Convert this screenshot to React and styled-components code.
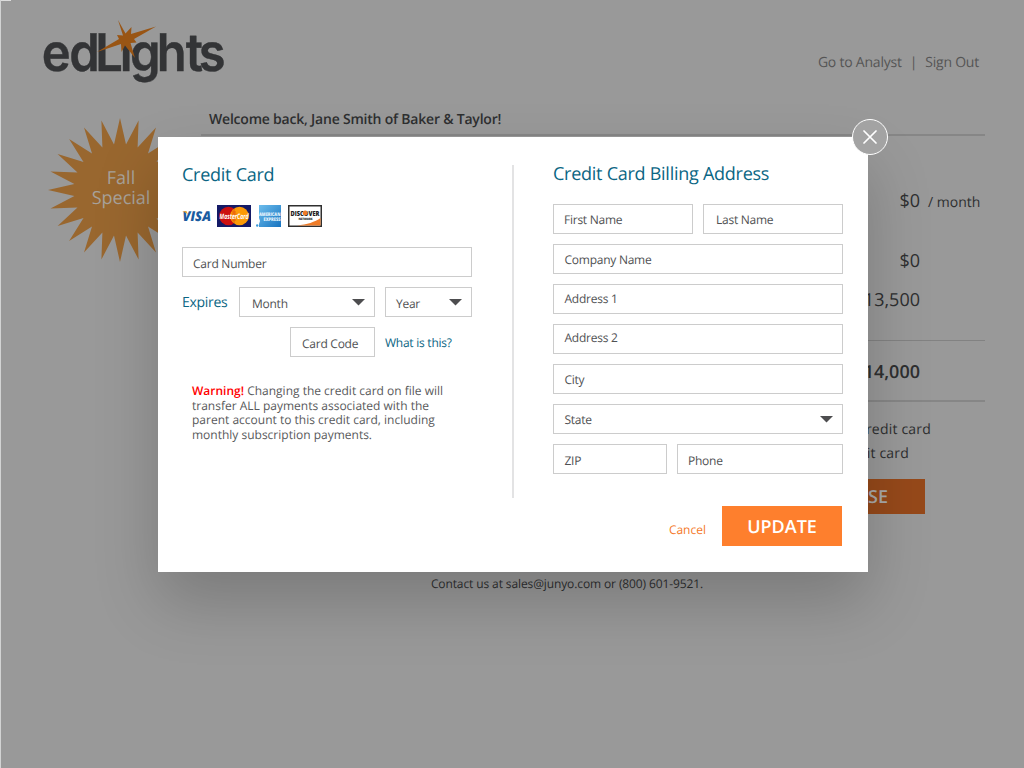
import React from 'react';
import styled, { createGlobalStyle } from 'styled-components';

const burstPoints = Array.from({ length: 48 }, (_, i) => {
  const r = i % 2 === 0 ? 72 : 46;
  const a = (i * 7.5 * Math.PI) / 180;
  return `${(72 + r * Math.sin(a)).toFixed(1)},${(72 - r * Math.cos(a)).toFixed(1)}`;
}).join(' ');

const Logo = () => (
  <LogoSvg viewBox="0 0 190 70" role="img" aria-label="edLights">
    <g transform="scale(0.94 1)">
      <text y="53" x="-0.4 28.9 56.6 82.7 93.7 122 153 166.8">edLıghts</text>
    </g>
    <polygon points="76,2 83.5,15.5 89.5,9 89,16 114,8.5 92,21 94.5,24.5 88.5,25 93,40 83,27.5 79.5,34 79,26 55,34 77,21 75,17 81,17.5" />
  </LogoSvg>
);

const CardLogos = () => (
  <Cards>
    <svg width="30" height="22" viewBox="0 0 30 22">
      <text x="0.5" y="16" textLength="28.5" lengthAdjust="spacingAndGlyphs" fontFamily="Open Sans, sans-serif" fontSize="13.5" fontWeight="800" fontStyle="italic" fill="#1a5ba0">VISA</text>
      <path d="M0 6.2h4.6l1.4 3.6C4.4 8 2.4 6.8 0 6.2z" fill="#f5a623" />
    </svg>
    <svg width="34" height="22" viewBox="0 0 34 22">
      <rect width="34" height="22" fill="#141a66" />
      <circle cx="11.5" cy="11" r="9.3" fill="#cc0f10" />
      <circle cx="22.5" cy="11" r="9.3" fill="#fb9a06" />
      <path d="M17 4v14M15 7h4M14.5 9h5M14.5 13h5M15 15h4" stroke="#e4520c" strokeWidth=".8" />
      <text x="2.6" y="13.6" textLength="29" lengthAdjust="spacingAndGlyphs" fontFamily="Open Sans, sans-serif" fontSize="7.5" fontWeight="700" fontStyle="italic" fill="#fff">MasterCard</text>
    </svg>
    <svg width="25" height="22" viewBox="0 0 25 22">
      <defs>
        <linearGradient id="amex" x1="0" y1="0" x2="1" y2="1">
          <stop offset="0" stopColor="#6dbdec" />
          <stop offset="1" stopColor="#1673c0" />
        </linearGradient>
      </defs>
      <path d="M3 0h22v22H3v-3l1-3-1-3z" fill="url(#amex)" />
      <text x="3" y="11" textLength="21.5" lengthAdjust="spacingAndGlyphs" fontFamily="Open Sans, sans-serif" fontSize="5" fontWeight="800" fill="#e6f4fd">AMERICAN</text>
      <text x="7.5" y="16" textLength="17" lengthAdjust="spacingAndGlyphs" fontFamily="Open Sans, sans-serif" fontSize="5" fontWeight="800" fill="#e6f4fd">EXPRESS</text>
      <circle cx="1.2" cy="20.5" r="1.2" fill="#3d9ad8" />
    </svg>
    <svg width="34" height="22" viewBox="0 0 34 22">
      <rect x=".75" y=".75" width="32.5" height="20.5" fill="#fff" stroke="#303030" strokeWidth="1.5" />
      <path d="M32.5 13v7.5H9C19 19.5 27 17 32.5 13z" fill="#ef7b27" />
      <text x="2.5" y="10.5" textLength="29" lengthAdjust="spacingAndGlyphs" fontFamily="Open Sans, sans-serif" fontSize="7" fontWeight="800" fill="#202020">DISCOVER</text>
      <circle cx="17.2" cy="8" r="2.5" fill="#ef7b27" />
      <text x="10.5" y="14.5" textLength="14" fontFamily="Open Sans, sans-serif" fontSize="3" fontWeight="800" fill="#303030">NETWORK</text>
    </svg>
  </Cards>
);

const Select = ({ children, width, pad, drop }) => (
  <Field $width={width} $pad={pad} $drop={drop}>
    <span>{children}</span>
    <Arrow viewBox="0 0 13 7"><path d="M0 0h13L6.5 6.5z" /></Arrow>
  </Field>
);

const App = () => {
  return (
    <Page>
      <GlobalStyle />
      <Header>
        <Logo />
        <Nav>
          <span>Go to Analyst</span>
          <i>|</i>
          <span>Sign Out</span>
        </Nav>
      </Header>
      <Body>
        <Badge>
          <svg width="144" height="144" viewBox="0 0 144 144">
            <polygon points={burstPoints} />
          </svg>
          <BadgeText>Fall<br />Special</BadgeText>
        </Badge>
        <Account>
          <Welcome>Welcome back, Jane Smith of Baker &amp; Taylor!</Welcome>
          <Line $height={38} $top={42}>$0<small>/ month</small></Line>
          <Line $height={39} $top={22}>$0</Line>
          <Line $height={38}>$13,500</Line>
          <Total>$14,000</Total>
          <Option $right={54}>Use my existing credit card</Option>
          <Option $right={76}>Use a new credit card</Option>
          <Purchase>PURCHASE</Purchase>
        </Account>
      </Body>
      <Footer>
        Contact us at sales@junyo.com or (800) 601-9521.
      </Footer>

      <Modal>
        <Close aria-label="Close">
          <svg width="14" height="14" viewBox="0 0 14 14">
            <path d="M1 1l12 12M13 1L1 13" stroke="#fff" strokeWidth="1.7" strokeLinecap="round" />
          </svg>
        </Close>
        <CardColumn>
          <Title $drop={2}>Credit Card</Title>
          <CardLogos />
          <Fields>
            <Field $drop={5}>Card Number</Field>
            <Row>
              <Expires>Expires</Expires>
              <Select width={136} pad={12} drop={5}>Month</Select>
              <Select width={87} drop={5}>Year</Select>
            </Row>
            <Row $indent={108}>
              <Field $width={85} $pad={11} $drop={5}>Card Code</Field>
              <Help>What is this?</Help>
            </Row>
          </Fields>
          <Warning>
            <b>Warning!</b> Changing the credit card on file will<br />
            transfer ALL payments associated with the<br />
            parent account to this credit card, including<br />
            monthly subscription payments.
          </Warning>
        </CardColumn>
        <AddressColumn>
          <Title $drop={1}>Credit Card Billing Address</Title>
          <Fields>
            <Row>
              <Field $width={140} $drop={4}>First Name</Field>
              <Field $width={140} $pad={12} $drop={4}>Last Name</Field>
            </Row>
            <Field $pad={10.5} $drop={4}>Company Name</Field>
            <Field $pad={10.5} $drop={1}>Address 1</Field>
            <Field $pad={10.5}>Address 2</Field>
            <Field $pad={10.5} $drop={3}>City</Field>
            <Select pad={10.5} drop={3}>State</Select>
            <Row>
              <Field $width={114} $pad={10.5} $drop={5}>ZIP</Field>
              <Field $width={166} $drop={5}>Phone</Field>
            </Row>
          </Fields>
          <Actions>
            <Cancel>Cancel</Cancel>
            <Update>UPDATE</Update>
          </Actions>
        </AddressColumn>
      </Modal>
    </Page>
  );
};

const GlobalStyle = createGlobalStyle`
  * {
    box-sizing: border-box;
  }

  body {
    margin: 0;
    background: #999;
    font-family: 'Open Sans', sans-serif;
    text-rendering: geometricPrecision;
  }

  button {
    padding: 0;
    border: 0;
    font-family: inherit;
    text-rendering: inherit;
  }
`;

const Page = styled.div`
  position: relative;
  width: 1024px;
  height: 768px;
  overflow: hidden;
  background: linear-gradient(#ddd, #ddd) 0 0 / 10px 1px no-repeat #999;
  border-left: 1px solid #d2d3d3;
  color: #2e2f30;
`;

const Header = styled.header`
  display: flex;
  justify-content: space-between;
  height: 108px;
  padding: 18px 45px 0 41px;
`;

const LogoSvg = styled.svg`
  width: 190px;
  height: 70px;
  overflow: visible;

  text {
    font-family: Inter, sans-serif;
    font-size: 52px;
    font-weight: 600;
    fill: #333436;
    stroke: #333436;
    stroke-width: 0.4px;
  }

  polygon {
    fill: #995514;
  }
`;

const Nav = styled.nav`
  display: flex;
  gap: 8px;
  margin-top: 34px;
  font-size: 14px;
  line-height: 21px;
  letter-spacing: -0.22px;
  color: #555;

  i {
    font-style: normal;
  }
`;

const Body = styled.div`
  display: flex;
  height: 466px;
  padding-left: 47px;
`;

const Badge = styled.div`
  display: grid;
  width: 153px;
  height: 144px;
  margin-top: 10px;

  svg {
    grid-area: 1 / 1;
    fill: #99672f;
  }
`;

const BadgeText = styled.div`
  grid-area: 1 / 1;
  width: 146px;
  padding-top: 50px;
  font-size: 18px;
  line-height: 20px;
  text-align: center;
  color: #a8a29b;
`;

const Account = styled.div`
  width: 784px;
`;

const Welcome = styled.div`
  height: 28px;
  padding-left: 8px;
  border-bottom: 2px solid #868686;
  font-size: 14px;
  font-weight: 600;
  line-height: 23px;
  letter-spacing: -0.21px;
`;

const Line = styled.div`
  display: flex;
  justify-content: flex-end;
  height: ${({ $height }) => $height}px;
  margin-top: ${({ $top }) => $top || 0}px;
  padding-right: 65px;
  font-size: 18px;
  line-height: 47px;

  small {
    width: 60px;
    margin-right: -60px;
    padding-left: 8px;
    font-size: 14px;
    line-height: 50px;
    white-space: nowrap;
  }
`;

const Total = styled.div`
  height: 62px;
  margin: 25px 0 15px;
  padding-right: 65px;
  border-top: 1px solid #828282;
  border-bottom: 2px solid #868686;
  font-size: 18px;
  font-weight: 600;
  line-height: 63px;
  text-align: right;
`;

const Option = styled.div`
  height: 24px;
  padding-right: ${({ $right }) => $right}px;
  font-size: 14px;
  line-height: 26px;
  letter-spacing: 0.2px;
  text-align: right;
`;

const Purchase = styled.button`
  display: block;
  width: 190px;
  height: 35px;
  margin: 14px 60px 0 auto;
  padding: 0 37px 0 0;
  background: #96491a;
  font-size: 18px;
  font-weight: 600;
  text-align: right;
  color: #aaa;
`;

const Footer = styled.footer`
  padding: 1px 0 0 109px;
  font-size: 12px;
  line-height: 18px;
  letter-spacing: -0.11px;
  text-align: center;
`;

const Modal = styled.div`
  position: absolute;
  top: 137px;
  left: 157px;
  display: flex;
  width: 710px;
  height: 435px;
  background: #fff;
  box-shadow: 0 30px 60px rgba(0, 0, 0, 0.2);
`;

const Close = styled.button`
  position: absolute;
  top: -18px;
  right: -20px;
  display: flex;
  align-items: center;
  justify-content: center;
  width: 36px;
  height: 36px;
  border: 1.5px solid #fff;
  border-radius: 50%;
  background: #a3a3a3;
`;

const CardColumn = styled.section`
  width: 356px;
  height: 333px;
  margin-top: 28px;
  padding-left: 24px;
  border-right: 2px solid #e3e3e4;
`;

const AddressColumn = styled.section`
  width: 290px;
  margin: 28px 0 0 39px;
`;

const Title = styled.h2`
  height: 39px;
  margin: 0;
  padding-top: ${({ $drop }) => $drop || 0}px;
  font-size: 18px;
  font-weight: 400;
  line-height: 17px;
  letter-spacing: -0.26px;
  color: #0b6684;
  white-space: nowrap;
`;

const Cards = styled.div`
  display: flex;
  gap: 5px;
  height: 43px;
  padding-top: 1px;

  svg:last-child {
    margin-left: 2px;
  }
`;

const Fields = styled.div`
  display: flex;
  flex-direction: column;
  gap: 10px;
  width: 290px;
`;

const Row = styled.div`
  display: flex;
  gap: 10px;
  height: 30px;
  padding-left: ${({ $indent }) => $indent || 0}px;
`;

const Field = styled.div`
  display: flex;
  flex-shrink: 0;
  justify-content: space-between;
  width: ${({ $width }) => ($width ? `${$width}px` : '100%')};
  height: 30px;
  padding: 0 9px 0 ${({ $pad }) => ($pad || 10)}px;
  border: 1px solid #ccc;
  font-size: 12px;
  line-height: ${({ $drop }) => 26 + ($drop || 0)}px;
  letter-spacing: -0.25px;
  color: #505153;
  white-space: nowrap;
`;

const Arrow = styled.svg`
  width: 13px;
  height: 7px;
  margin-top: 11px;
  fill: #4d4d4f;
`;

const Expires = styled.div`
  width: 47px;
  font-size: 14px;
  line-height: 32px;
  letter-spacing: -0.3px;
  color: #0b6684;
`;

const Help = styled.div`
  font-size: 12px;
  line-height: 32px;
  letter-spacing: -0.25px;
  color: #0b6684;
`;

const Warning = styled.p`
  margin: 27px 0 0 10px;
  font-size: 12px;
  line-height: 14.5px;
  color: #58595b;
  white-space: nowrap;

  b {
    font-weight: 600;
    color: #f00;
  }
`;

const Actions = styled.div`
  display: flex;
  align-items: center;
  justify-content: flex-end;
  gap: 16px;
  margin-top: 32px;
`;

const Cancel = styled.span`
  padding-top: 6px;
  font-size: 12px;
  color: #f5792a;
`;

const Update = styled.button`
  width: 120px;
  height: 40px;
  margin-right: 1px;
  padding-top: 2px;
  background: #fe7f2d;
  font-size: 18px;
  font-weight: 600;
  color: #fff;
`;

export default App;
